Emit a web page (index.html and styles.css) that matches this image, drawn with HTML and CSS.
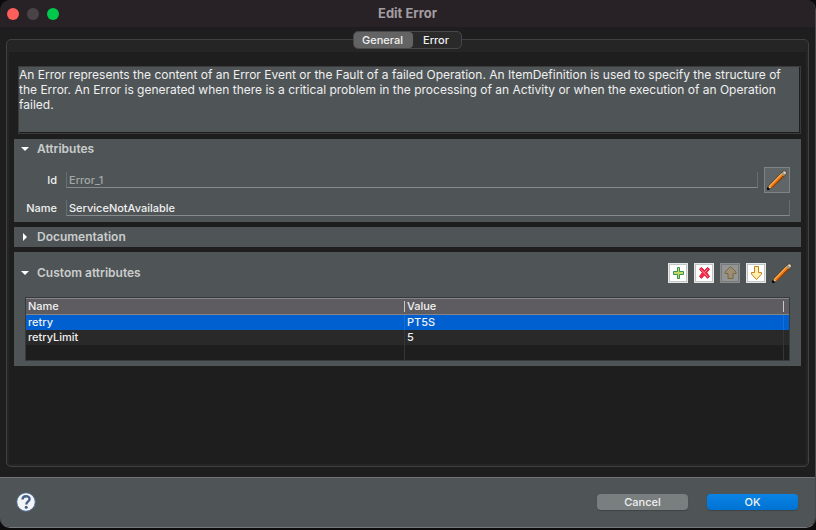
FILE: index.html
```html
<!DOCTYPE html>
<html lang="en">
<head>
<meta charset="utf-8">
<title>Edit Error</title>
<link rel="stylesheet" href="styles.css">
</head>
<body>
<svg class="defs" width="0" height="0" aria-hidden="true">
  <symbol id="pencil" viewBox="0 0 20 20">
    <path d="M0.5 19.5 1.400 15.500 15.200 1.400Q17 -.2 19 1.200 20.300 3 18.800 5L4.600 18.600Z" fill="#5a3a22"/>
    <path d="M1.800 16 14.600 3l1.500 1.300L3.300 17.400z" fill="#ffb85a"/>
    <path d="M2.700 16.800 15.400 3.800l1.900 1.800L4.400 18.400z" fill="#f07a14"/>
    <path d="M3.900 18 16.700 5l.9.900L4.600 18.600z" fill="#8a3d0c"/>
    <path d="M1.200 18.700 1.900 15.900l2.300 2.200z" fill="#e9cfa5"/>
    <path d="M0 20v-2.600l1-.4 2 2-.6 1z" fill="#0c0c0c"/>
    <path d="M14.300 3.500 15.800 2l2.500 2.500-1.500 1.500z" fill="#8fa088"/>
    <path d="M15.700 2.100q1.600-1.500 2.800-.4 1.200 1.300-.2 2.900z" fill="#e2dad4"/>
  </symbol>
</svg>
<main class="window">
  <header class="titlebar">
    <div class="lights"><i class="light close"></i><i class="light idle"></i><i class="light full"></i></div>
    <h1>Edit Error</h1>
  </header>
  <div class="content">
    <div class="tabs" role="tablist">
      <button class="tab selected" role="tab" aria-selected="true">General</button>
      <button class="tab" role="tab" aria-selected="false">Error</button>
    </div>
    <div class="panel">
      <div class="page">
        <textarea class="description" aria-label="Description" readonly>An Error represents the content of an Error Event or the Fault of a failed Operation. An ItemDefinition is used to specify the structure of
the Error. An Error is generated when there is a critical problem in the processing of an Activity or when the execution of an Operation
failed.</textarea>
        <section class="section">
          <button class="heading" aria-expanded="true"><svg class="arrow" viewBox="0 0 8 8"><path d="M0 2h8L4 6z"/></svg>Attributes</button>
          <div class="fields">
            <label for="id">Id</label>
            <input id="id" class="field" value="Error_1" disabled>
            <button class="edit" aria-label="Edit id"><svg><use href="#pencil"/></svg></button>
            <label for="name">Name</label>
            <input id="name" class="field wide" value="ServiceNotAvailable">
          </div>
        </section>
        <section class="section">
          <button class="heading" aria-expanded="false"><svg class="arrow" viewBox="0 0 8 8"><path d="M2 0v8l4-4z"/></svg>Documentation</button>
        </section>
        <section class="section custom">
          <div class="bar">
            <button class="heading" aria-expanded="true"><svg class="arrow" viewBox="0 0 8 8"><path d="M0 2h8L4 6z"/></svg>Custom attributes</button>
            <div class="tools">
              <button class="tool" aria-label="Add"><svg viewBox="0 0 20 20"><path d="M9.500 4.500h2v4h4v3h-4v4h-2v-4h-4v-3h4z" fill="#c3dc68" stroke="#369150"/></svg></button>
              <button class="tool" aria-label="Remove"><svg viewBox="0 0 20 20"><path d="M5.500 6 7.500 4.500 10.500 7.500 13.500 4.500 15.500 6 12.800 9.700 15.500 13.500 13.500 15.300 10.500 12 7.500 15.300 5.500 13.500 8.300 9.700z" fill="#fa2a48" stroke="#d91d3b"/><path d="m7 6.500 6.500 7M13.500 6.500l-3 3" stroke="#ff8792" fill="none"/></svg></button>
              <button class="tool" aria-label="Move up" disabled><svg viewBox="0 0 20 20"><path d="M10.500 3.500 16 9v1.500h-3v5.000H8v-5.000H5V9z" fill="#9c8e74" stroke="#7d653c"/></svg></button>
              <button class="tool" aria-label="Move down"><svg viewBox="0 0 20 20"><path d="M8.500 3.500h4v6h3V11l-5 5.500L5.500 11V9.500h3z" fill="#fff0ae" stroke="#c8811c"/></svg></button>
              <button class="tool plain" aria-label="Edit"><svg><use href="#pencil"/></svg></button>
            </div>
          </div>
          <table>
            <colgroup><col class="half"><col class="half"><col class="end"></colgroup>
            <thead><tr><th>Name</th><th>Value</th><th></th></tr></thead>
            <tbody>
              <tr class="active"><td>retry</td><td>PT5S</td><td></td></tr>
              <tr class="alt"><td>retryLimit</td><td>5</td><td></td></tr>
              <tr><td></td><td></td><td></td></tr>
            </tbody>
          </table>
        </section>
      </div>
    </div>
  </div>
  <footer>
    <button class="help" aria-label="Help"><svg viewBox="0 0 20 20"><circle cx="10" cy="10" r="9.300" fill="#f3f4f6" stroke="#46648c"/><path d="M6.500 7.600C6.500 3.200 13.600 3.200 13.600 7 13.600 9.500 10.300 9.400 10.300 12.600" fill="none" stroke="#45618a" stroke-width="2.400"/><circle cx="10.200" cy="15.300" r="1.500" fill="#45618a"/></svg></button>
    <button class="push">Cancel</button>
    <button class="push primary">OK</button>
  </footer>
</main>
</body>
</html>
```
FILE: styles.css
```css
* { box-sizing: border-box; }

body {
  margin: 0;
  padding-bottom: 2px;
  background: #0c0c0c;
  color: #f0f0f0;
  font: 500 11px/15px Inter, "Liberation Sans", sans-serif;
}

button, input, textarea {
  margin: 0;
  padding: 0;
  border: 0;
  background: none;
  color: inherit;
  font: inherit;
}

svg { display: block; }
.defs { position: absolute; }

.window {
  display: flex;
  flex-direction: column;
  min-height: calc(100vh - 2px);
  overflow: hidden;
  border-right: 1px solid #4a4a4a;
  border-bottom: 1px solid #757979;
  border-radius: 10px;
  background: #1e1e1e;
}

.titlebar {
  display: grid;
  grid-template-columns: 1fr auto 1fr;
  align-items: center;
  height: 27px;
  padding: 0 7px;
  background: #282226;
}

.titlebar h1 {
  margin: 0;
  color: #a19da0;
  font-size: 13px;
  font-weight: 700;
}

.lights { display: flex; gap: 8px; }
.light { width: 12px; height: 12px; border-radius: 50%; }
.close { background: #ff5f5b; }
.idle { background: #494347; }
.full { background: #00c94b; }

.content {
  display: flex;
  flex: 1;
  flex-direction: column;
  padding: 4px 6px 10px;
}

.tabs {
  z-index: 1;
  display: flex;
  align-self: center;
  height: 18px;
  margin-bottom: -10px;
  border: 1px solid #484848;
  border-radius: 5px;
  background: #2a2a2a;
}

.tab { padding: 0 12px 0 10px; border-radius: 4px; line-height: 16px; }
.tab.selected { padding: 0 10px 0 8px; background: #636363; }

.panel {
  display: flex;
  flex: 1;
  padding: 12px 2px 2px;
  border: 1px solid #414141;
  border-radius: 5px;
  background: #252525;
}

.page {
  display: flex;
  flex: 1;
  flex-direction: column;
  gap: 5px;
  padding: 14px 5px 0;
  background: #1e1e1e;
}

.description {
  height: 68px;
  margin: 0 0 0 4px;
  padding: 0;
  resize: none;
  border: 1px solid #3b3b3b;
  background: #4f5557;
  box-shadow: inset -1px -1px #1e1e1e;
  font-size: 12px;
  font-weight: 400;
}

.section { background: #4f5557; }

.heading {
  display: flex;
  align-items: center;
  gap: 8px;
  height: 20px;
  padding: 0 7px 1px;
  color: #cacccc;
  font-size: 12px;
  font-weight: 600;
}

.arrow { width: 8px; height: 8px; fill: #fff; }

.fields {
  display: grid;
  grid-template-columns: 43px 1fr 26px;
  align-items: center;
  gap: 7px 6px;
  padding: 8px 11px 6px 0;
}

.fields label { text-align: right; }

.field {
  min-width: 0;
  height: 16px;
  margin-left: 3px;
  padding-left: 2px;
  border: 1px solid #686e70;
  border-top: 0;
  border-bottom-color: #878b8c;
}

.field:disabled { color: #a3a6a7; }
.wide { grid-column: 2 / 4; }

.edit {
  height: 26px;
  padding: 2px;
  border: 1px solid #7f8485;
  background: #606667;
}

.edit svg, .tool svg { width: 20px; height: 20px; }

.custom { padding-bottom: 5px; }

.bar {
  display: flex;
  align-items: center;
  justify-content: space-between;
  padding: 11px 9px 14px 0;
}

.tools { display: flex; gap: 6px; }

.tool {
  border-radius: 1px;
  background: #fff;
  box-shadow: inset 0 0 0 1px #e6e7e7, inset 0 0 0 2px #c3c5c5;
}

.tool:disabled { background: #929594; box-shadow: inset 0 0 0 1px #8b8e8e, inset 0 0 0 2px #777a7a; }
.tool.plain { background: none; box-shadow: none; }

table {
  width: calc(100% - 22px);
  margin: 0 11px;
  table-layout: fixed;
  border: 1px solid #383a3b;
  border-spacing: 0;
  background: #1e1e1e;
}

.end { width: 5px; }

th, td { height: 15px; padding: 0 2px; text-align: left; }

th {
  height: 17px;
  border-top: 1px solid #858487;
  border-bottom: 1px solid #858487;
  background: linear-gradient(#c8c7c9, #c8c7c9) right center / 1px 11px no-repeat #5f5c61;
  font-weight: 500;
}

td { border-right: 1px solid #353535; }
th:last-child { background-image: none; }
td:last-child { border-right: 0; }
th:last-child, td:last-child { padding: 0; }
.active td { border-color: #176dda; background: #0060d0; }
.alt td { background: #292929; }

footer {
  display: flex;
  align-items: center;
  gap: 19px;
  height: 50px;
  padding: 0 17px 1px 16px;
  border-top: 1px solid #707475;
  background: #4f5557;
}

.help { margin-right: auto; }
.help svg { width: 20px; height: 20px; }

.push {
  width: 91px;
  height: 16px;
  border-radius: 4px;
  background: #797e7f;
  box-shadow: 0 1px 1px #3f4446;
  line-height: 16px;
}

.primary { background: linear-gradient(#0a84e6, #0072d2); }
```
